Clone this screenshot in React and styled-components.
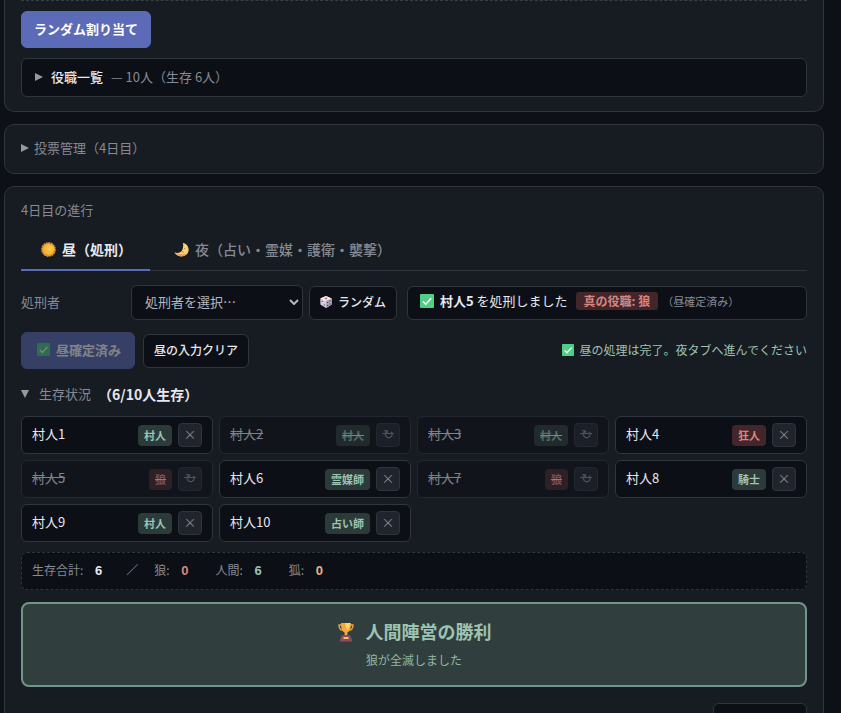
import React, { useState } from 'react'
import styled, { createGlobalStyle } from 'styled-components'

const players = [
    { name: '村人1', role: '村人', alive: true },
    { name: '村人2', role: '村人', alive: false },
    { name: '村人3', role: '村人', alive: false },
    { name: '村人4', role: '狂人', alive: true, evil: true },
    { name: '村人5', role: '狼', alive: false, evil: true },
    { name: '村人6', role: '霊媒師', alive: true },
    { name: '村人7', role: '狼', alive: false, evil: true },
    { name: '村人8', role: '騎士', alive: true },
    { name: '村人9', role: '村人', alive: true },
    { name: '村人10', role: '占い師', alive: true },
]

const Sun = () => (
    <Icon viewBox="0 0 16 16" aria-hidden="true">
        <circle cx="8" cy="8" r="7.2" fill="none" stroke="#d98a30" strokeWidth="1.4" strokeDasharray="2 .8" />
        <circle cx="8" cy="8" r="7" fill="#eb9c32" />
        <circle cx="8.4" cy="7.6" r="5.6" fill="#f9b934" />
        <circle cx="9" cy="7" r="3" fill="#fcc84a" />
    </Icon>
)

const Moon = () => (
    <Icon viewBox="0 0 16 16" aria-hidden="true">
        <path d="M9.400 1C14.600 1.600 17 7.400 14.800 11.400 12 16.400 3.600 16.800.6 11.200c3.600 1.200 7-.2 8.200-2.800 1-2.200 1.400-5 .6-7.400z" fill="#fbd070" />
        <path d="M.6 11.200c3.800 2.200 9.600 2.200 13.800 1C11.400 16.500 3.600 16.600.6 11.200z" fill="#ec9f5c" />
        <path d="M8.800 10.200l1.600.8M11.200 6.400v1" stroke="#b06c42" />
    </Icon>
)

const Check = () => (
    <Icon viewBox="0 0 14 14" aria-hidden="true">
        <rect width="14" height="14" rx="1" fill="#4fcf86" />
        <path d="M3 7.4l2.8 2.8 5.4-6" fill="none" stroke="#fff" strokeWidth="1.5" />
    </Icon>
)

const Dice = () => (
    <Icon viewBox="0 0 14 14" aria-hidden="true">
        <path d="M7 0l6.600 2.800v7.200L7 14 .4 10V2.800z" fill="#d6cddd" />
        <path d="M7 0l6.600 2.800L7 5.800.4 2.800z" fill="#f5eef3" />
        <path d="M7 5.800l6.600-3V10L7 14z" fill="#afa3bb" />
        <ellipse cx="7" cy="2.800" rx="1.700" ry="1" fill="#e8694f" />
        <g fill="#4a4058">
            <circle cx="8.9" cy="7.4" r=".8" />
            <circle cx="11.6" cy="9.2" r=".8" />
            <circle cx="8.9" cy="11" r=".8" />
            <circle cx="11.6" cy="5.800" r=".8" />
            <circle cx="2.6" cy="6.2" r=".7" />
            <circle cx="5" cy="10.4" r=".7" />
        </g>
    </Icon>
)

const Trophy = () => (
    <Icon $large viewBox="0 0 18 20" aria-hidden="true">
        <path d="M5 3H2c0 3.4 1.4 5 4 5.4M13 3h3c0 3.4-1.4 5-4 5.4" fill="none" stroke="#f0a23c" strokeWidth="1.4" />
        <path d="M4 1h10c.2 5-1.2 8.4-3.6 9.4v3H7.6v-3C5.2 9.4 3.8 6 4 1z" fill="#f3a93b" />
        <path d="M8 1h5c0 4-1 6.6-3 7.6z" fill="#fdd75e" />
        <path d="M4.600 13.2h8.800l2 6.300H2.600z" fill="#8e4a5f" />
        <rect x="6.5" y="15" width="5" height="2" fill="#f7c456" />
    </Icon>
)

function App() {
    const [tab, setTab] = useState('day')

    return (
        <Page>
            <GlobalStyle />
            <TopPanel>
                <Assign>
                    <PrimaryButton type="button">ランダム割り当て</PrimaryButton>
                </Assign>
                <RoleList>
                    <RoleSummary>
                        <Arrow />
                        <strong>役職一覧</strong>
                        <span>— 10人（生存 6人）</span>
                    </RoleSummary>
                </RoleList>
            </TopPanel>

            <Panel>
                <details>
                    <VoteSummary>
                        <Arrow $small />
                        投票管理（4日目）
                    </VoteSummary>
                </details>
            </Panel>

            <Panel>
                <Title>4日目の進行</Title>
                <Tabs role="tablist">
                    <Tab type="button" role="tab" aria-selected={tab === 'day'} $active={tab === 'day'} onClick={() => setTab('day')}>
                        <Sun />昼（処刑）
                    </Tab>
                    <Tab type="button" role="tab" aria-selected={tab === 'night'} $active={tab === 'night'} onClick={() => setTab('night')}>
                        <Moon />夜（占い・霊媒・護衛・襲撃）
                    </Tab>
                </Tabs>

                <ExecuteRow>
                    <Label htmlFor="target">処刑者</Label>
                    <SelectWrap>
                        <Select id="target" defaultValue="">
                            <option value="">処刑者を選択…</option>
                            {players.filter((p) => p.alive).map((p) => (
                                <option key={p.name}>{p.name}</option>
                            ))}
                        </Select>
                        <Chevron viewBox="0 0 10 6" aria-hidden="true">
                            <path d="M1 1l4 4 4-4" />
                        </Chevron>
                    </SelectWrap>
                    <Button type="button"><Dice />ランダム</Button>
                    <Result>
                        <Check />
                        <span><b>村人5</b> を処刑しました</span>
                        <TrueRole>真の役職: 狼</TrueRole>
                        <small>（昼確定済み）</small>
                    </Result>
                </ExecuteRow>

                <ActionRow>
                    <PrimaryButton type="button" disabled><Check />昼確定済み</PrimaryButton>
                    <Button type="button">昼の入力クリア</Button>
                    <Done><Check />昼の処理は完了。夜タブへ進んでください</Done>
                </ActionRow>

                <details open>
                    <AliveSummary>
                        <Arrow $down />
                        <span>生存状況</span>
                        <strong>（6/10人生存）</strong>
                    </AliveSummary>
                    <Grid>
                        {players.map((p) => (
                            <Player key={p.name} $dead={!p.alive}>
                                <Name>{p.name}</Name>
                                <Role $evil={p.evil}>{p.role}</Role>
                                <Toggle type="button" aria-label={p.name}>{p.alive ? '×' : '↻'}</Toggle>
                            </Player>
                        ))}
                    </Grid>
                </details>

                <Totals>
                    <Total>生存合計: <b>6</b></Total>
                    <Slash>／</Slash>
                    <Total $color="#d98581">狼: <b>0</b></Total>
                    <Total $color="#9dc3b1">人間: <b>6</b></Total>
                    <Total $color="#e0b588">狐: <b>0</b></Total>
                </Totals>

                <Victory>
                    <h2><Trophy />人間陣営の勝利</h2>
                    <p>狼が全滅しました</p>
                </Victory>

                <Footer>
                    <FooterButton type="button" aria-label="次へ" />
                </Footer>
            </Panel>
        </Page>
    )
}

export default App

const GlobalStyle = createGlobalStyle`
    * {
        box-sizing: border-box;
    }

    html {
        background: #0d1017;
        scrollbar-width: none;
    }

    body {
        margin: 0;
        color: #e6e8ef;
        font-family: 'Noto Sans CJK JP', sans-serif;
        font-size: 13px;
        line-height: 20px;
    }

    button, select {
        font-family: inherit;
    }
`

const Page = styled.main`
    padding: 0 17px 24px 4px;
`

const Icon = styled.svg`
    flex: none;
    width: ${(props) => (props.$large ? '18px' : '14px')};
    height: ${(props) => (props.$large ? '20px' : '14px')};
    margin-right: ${(props) => (props.$large ? '11px' : '6px')};
`

const Panel = styled.section`
    margin-bottom: 12px;
    padding: 14px 16px;
    background: #171b22;
    border: 1px solid #30343c;
    border-radius: 10px;
`

const TopPanel = styled(Panel)`
    padding-top: 0;
    border-top: none;
    border-radius: 0 0 10px 10px;
`

const Assign = styled.div`
    padding: 10px 0;
    border-top: 1px dashed #3a3e48;
`

const Button = styled.button`
    display: flex;
    align-items: center;
    height: 34px;
    padding: 0 10px 2px;
    font-size: 12px;
    font-weight: 500;
    color: #e6e8ef;
    background: #0d0f16;
    border: 1px solid #30343c;
    border-radius: 6px;
    white-space: nowrap;
    cursor: pointer;

    svg {
        width: 12px;
        height: 12px;
    }
`

const PrimaryButton = styled(Button)`
    height: 37px;
    padding: 0 12px 2px;
    font-size: 13px;
    font-weight: 700;
    color: #fff;
    background: #5c6bb8;
    border-color: #5c6bb8;

    &:disabled {
        padding: 0 13px 2px 15px;
        opacity: 0.45;
        cursor: default;
    }

    svg {
        width: 13px;
        height: 13px;
    }
`

const Arrow = styled.i`
    width: 0;
    height: 0;
    border: 4px solid transparent;
    border-left: 8px solid #9499a3;
    border-right: 0;
    margin-right: ${(props) => (props.$small ? '5px' : '8px')};

    ${(props) => props.$down && `
        border: 4px solid transparent;
        border-top: 8px solid #9499a3;
        border-bottom: 0;
        margin-right: 10px;
    `}
`

const RoleList = styled.details`
    background: #0d0f16;
    border: 1px solid #30343c;
    border-radius: 6px;
`

const Summary = styled.summary`
    display: flex;
    align-items: center;
    color: #858a94;
    cursor: pointer;
    list-style: none;
`

const RoleSummary = styled(Summary)`
    height: 37px;
    padding: 0 13px 2px;

    strong {
        margin-right: 8px;
        font-weight: 500;
        color: #e6e8ef;
    }
`

const VoteSummary = styled(Summary)`
    height: 20px;
    padding-bottom: 2px;
`

const Title = styled.h2`
    margin: 0;
    font-size: 13px;
    font-weight: 400;
    line-height: 18px;
    color: #858a94;
`

const Tabs = styled.div`
    display: flex;
    gap: 4px;
    margin-top: 10px;
    border-bottom: 1px solid #30343c;
`

const Tab = styled.button`
    display: flex;
    align-items: center;
    height: 42px;
    margin-bottom: -1px;
    padding: 0 18px 0 20px;
    font-size: 14px;
    font-weight: ${(props) => (props.$active ? 700 : 500)};
    color: ${(props) => (props.$active ? '#e6e8ef' : '#858a94')};
    background: none;
    border: none;
    border-bottom: 2px solid ${(props) => (props.$active ? '#5c6bb8' : 'transparent')};
    cursor: pointer;

    svg {
        width: 15px;
        height: 15px;
    }
`

const ExecuteRow = styled.div`
    display: flex;
    align-items: center;
    gap: 6px;
    margin-top: 14px;
`

const Label = styled.label`
    width: 104px;
    padding-bottom: 2px;
    color: #858a94;
`

const SelectWrap = styled.div`
    position: relative;
    width: 172px;
`

const Select = styled.select`
    display: block;
    appearance: none;
    width: 100%;
    height: 35px;
    padding: 0 24px 2px 13px;
    font-size: 13px;
    color: #b4b7bf;
    background: #0d0f16;
    border: 1px solid #30343c;
    border-radius: 6px;
`

const Chevron = styled.svg`
    position: absolute;
    top: 14px;
    right: 4px;
    width: 10px;
    height: 6px;
    fill: none;
    stroke: #b4b7bf;
    stroke-width: 2;
    pointer-events: none;
`

const Result = styled.div`
    flex: 1;
    display: flex;
    align-items: center;
    height: 34px;
    margin-left: 4px;
    padding: 0 12px 3px;
    background: #0d0f16;
    border: 1px solid #30343c;
    border-radius: 6px;
    white-space: nowrap;

    small {
        font-size: 11px;
        color: #858a94;
    }
`

const TrueRole = styled.span`
    margin: 0 4px 0 8px;
    padding: 0 8px;
    font-size: 12px;
    font-weight: 700;
    line-height: 18px;
    color: #d98581;
    background: #43262a;
    border-radius: 3px;
`

const ActionRow = styled.div`
    display: flex;
    align-items: center;
    gap: 8px;
    margin-top: 12px;
`

const Done = styled.span`
    display: flex;
    align-items: center;
    margin-left: auto;
    padding-bottom: 2px;
    font-size: 12px;
    color: #9dc3b1;

    svg {
        width: 12px;
        height: 12px;
    }
`

const AliveSummary = styled(Summary)`
    margin: 15px 0 12px;

    span {
        margin-right: 7px;
    }

    strong {
        font-size: 14px;
        font-weight: 700;
        color: #e6e8ef;
    }
`

const Grid = styled.div`
    display: grid;
    grid-template-columns: repeat(4, 1fr);
    gap: 6px;
`

const Player = styled.div`
    display: flex;
    align-items: center;
    gap: 6px;
    height: 38px;
    padding: 0 10px;
    background: #0d0f16;
    border: 1px solid #30343c;
    border-radius: 6px;
    opacity: ${(props) => (props.$dead ? 0.5 : 1)};

    &, button {
        text-decoration: ${(props) => (props.$dead ? 'line-through' : 'none')};
    }
`

const Name = styled.span`
    flex: 1;
    padding-bottom: 2px;
`

const Role = styled.span`
    padding: 0 6px 1px;
    font-size: 11px;
    font-weight: 700;
    line-height: 20px;
    color: ${(props) => (props.$evil ? '#d98581' : '#9dc3b1')};
    background: ${(props) => (props.$evil ? '#43262a' : '#2c3a39')};
    border-radius: 4px;
`

const Toggle = styled.button`
    width: 24px;
    height: 24px;
    padding: 0 0 3px;
    font-size: 13px;
    color: #858a94;
    background: #20242c;
    border: 1px solid #30343c;
    border-radius: 4px;
    cursor: pointer;
`

const Totals = styled.div`
    display: flex;
    align-items: center;
    height: 38px;
    margin-top: 10px;
    padding: 0 10px 2px;
    font-size: 12px;
    color: #858a94;
    background: #0d0f16;
    border: 1px dashed #30343c;
    border-radius: 6px;
`

const Total = styled.span`
    margin-right: 27px;

    b {
        margin-left: 9px;
        font-family: 'Liberation Sans', sans-serif;
        font-size: 13px;
        color: ${(props) => props.$color || '#e6e8ef'};
    }
`

const Slash = styled.span`
    margin: 0 16px 0 -3px;
`

const Victory = styled.div`
    margin-top: 12px;
    padding: 13px 14px 15px;
    text-align: center;
    color: #9dc3b1;
    background: #303f3e;
    border: 2px solid #719586;
    border-radius: 8px;

    h2 {
        display: flex;
        align-items: center;
        justify-content: center;
        margin: 0;
        font-size: 18px;
        font-weight: 700;
        line-height: 29px;
    }

    p {
        margin: 4px 0 0;
        font-size: 12px;
        opacity: 0.9;
    }
`

const Footer = styled.div`
    display: flex;
    justify-content: flex-end;
    margin-top: 16px;
`

const FooterButton = styled(Button)`
    width: 94px;
`
